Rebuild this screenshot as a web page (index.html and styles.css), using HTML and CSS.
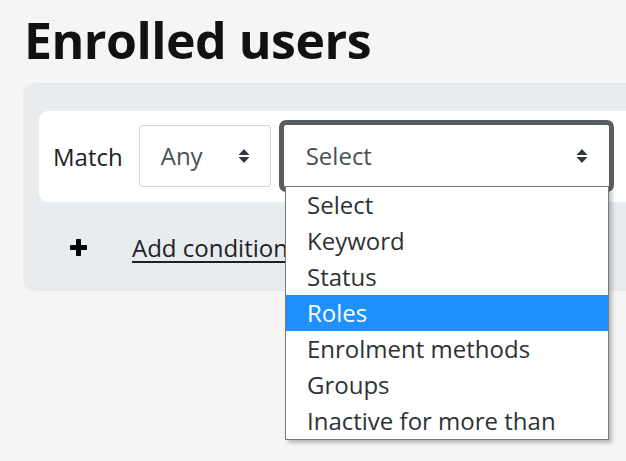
FILE: index.html
```html
<!DOCTYPE html>
<html lang="en">
<head>
<meta charset="utf-8">
<title>Enrolled users</title>
<link rel="stylesheet" href="styles.css">
</head>
<body>
<h1 class="title">Enrolled users</h1>
<div class="filters">
  <div class="card">
    <span class="match-label">Match</span>
    <div class="select select-any">
      <span class="select-value">Any</span>
      <svg class="arrows" width="12" height="16" viewBox="0 0 12 16"><path d="M6 1 L11.5 7 L0.5 7 Z M0.5 9 L11.5 9 L6 15 Z" fill="#343a40"/></svg>
    </div>
    <div class="select select-focus">
      <span class="select-value">Select</span>
      <svg class="arrows" width="12" height="16" viewBox="0 0 12 16"><path d="M6 1 L11.5 7 L0.5 7 Z M0.5 9 L11.5 9 L6 15 Z" fill="#343a40"/></svg>
    </div>
  </div>
  <div class="add-row">
    <svg class="plus" width="17" height="17" viewBox="0 0 17 17"><path d="M6.5 0.5 H10.5 V6.5 H16.5 V10.5 H10.5 V16.5 H6.5 V10.5 H0.5 V6.5 H6.5 Z" fill="#000" stroke="#000" stroke-linejoin="round"/></svg>
    <a class="add-link" href="#">Add condition</a>
  </div>
</div>
<ul class="dropdown">
  <li class="option">Select</li>
  <li class="option">Keyword</li>
  <li class="option">Status</li>
  <li class="option option-active">Roles</li>
  <li class="option">Enrolment methods</li>
  <li class="option">Groups</li>
  <li class="option">Inactive for more than</li>
</ul>
</body>
</html>
```
FILE: styles.css
```css
html, body {
  margin: 0;
  padding: 0;
}
body {
  background: #f5f5f5;
  font-family: "Open Sans", "Noto Sans", sans-serif;
  color: #1d2125;
  width: 626px;
  height: 461px;
  overflow: hidden;
  position: relative;
}
.title {
  margin: 0;
  padding: 10px 0 0 24px;
  font-size: 50px;
  line-height: 60px;
  font-weight: 700;
  color: #111;
  height: 70px;
  box-sizing: border-box;
  letter-spacing: -0.5px;
}
.filters {
  margin: 13px 0 0 23px;
  background: #e9ecef;
  border-radius: 11px 0 0 11px;
  padding: 28px 0 16px 16px;
  overflow: hidden;
}
.card {
  display: flex;
  align-items: center;
  height: 91px;
  background: #fff;
  border-radius: 9px 0 0 9px;
  padding-left: 14px;
  box-sizing: border-box;
  overflow: hidden;
}
.match-label {
  font-size: 24px;
  color: #1d2125;
  margin-right: 16px;
  flex: none;
}
.select {
  display: flex;
  align-items: center;
  justify-content: space-between;
  background: #fff;
  box-sizing: border-box;
  font-size: 24px;
  color: #495057;
  flex: none;
}
.select-any {
  width: 132px;
  height: 62px;
  border: 1px solid #ced4da;
  border-radius: 3px;
  padding: 0 20px 0 21px;
  margin-right: 8px;
  margin-top: -2px;
}
.select-focus {
  width: 335px;
  height: 72px;
  border: 5px solid #595e63;
  border-radius: 7px;
  padding: 0 21px 0 22px;
  margin-top: -2px;
}
.arrows {
  display: block;
}
.add-row {
  display: flex;
  align-items: center;
  height: 56px;
  margin-top: 17px;
  padding-left: 31px;
}
.plus {
  display: block;
  margin-right: 45px;
}
.add-link {
  font-size: 24px;
  color: #1d2125;
  text-decoration: underline;
  text-underline-offset: 4px;
  text-decoration-thickness: 2px;
  white-space: nowrap;
}
.dropdown {
  position: absolute;
  left: 285px;
  top: 186px;
  width: 324px;
  margin: 0;
  padding: 0;
  list-style: none;
  background: #fff;
  border: 1px solid #7a7a7a;
  box-sizing: border-box;
  box-shadow: 3px 3px 4px rgba(0, 0, 0, 0.25);
}
.option {
  height: 36px;
  line-height: 36px;
  padding-left: 21px;
  font-size: 24px;
  color: #2d3236;
  white-space: nowrap;
}
.option-active {
  background: #1e90ff;
  color: #fff;
}
```
